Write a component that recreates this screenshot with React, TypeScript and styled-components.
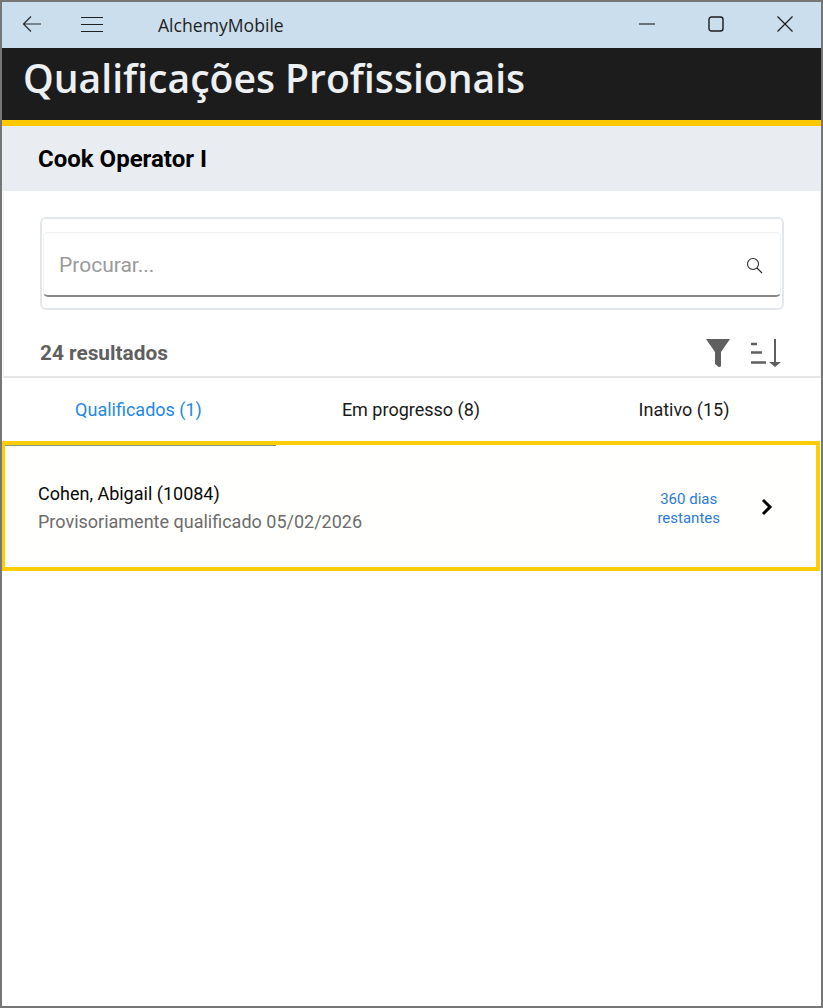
import React from "react";
import styled, { createGlobalStyle } from "styled-components";

const GlobalStyle = createGlobalStyle`
  html, body {
    margin: 0;
    padding: 0;
    background: #ffffff;
  }
`;

const Window = styled.div`
  box-sizing: border-box;
  width: 823px;
  height: 1008px;
  border: 2px solid #767676;
  display: flex;
  flex-direction: column;
  background: #ffffff;
  overflow: hidden;
`;

const TitleBar = styled.div`
  height: 46px;
  flex: none;
  background: #cbdeed;
  display: flex;
  align-items: center;
  padding-right: 2px;
`;

const BarButton = styled.button<{ $width: number }>`
  box-sizing: border-box;
  width: ${(p) => p.$width}px;
  height: 46px;
  flex: none;
  border: 0;
  padding: 0 0 2px 0;
  background: transparent;
  display: flex;
  align-items: center;
  justify-content: center;
`;

const AppName = styled.div`
  margin-left: 36px;
  font-family: "Open Sans", "Noto Sans", sans-serif;
  font-size: 17.6px;
  color: #1f1f1f;
  flex: 1;
`;

const PageHeader = styled.header`
  box-sizing: border-box;
  height: 78px;
  flex: none;
  background: #1c1c1c;
  border-bottom: 6px solid #ffc800;
  padding-left: 21px;
  display: flex;
  align-items: flex-start;
`;

const PageTitle = styled.h1`
  margin: 0;
  font-family: "Open Sans", "Noto Sans", sans-serif;
  font-size: 39.1px;
  line-height: 60px;
  font-weight: 600;
  color: #edf0f3;
`;

const SubHeader = styled.div`
  box-sizing: border-box;
  height: 65px;
  flex: none;
  background: #e9edf1;
  padding-left: 36px;
  display: flex;
  align-items: center;
  font-family: Roboto, sans-serif;
  font-size: 24px;
  font-weight: 700;
  color: #000000;
`;

const SearchPanel = styled.section`
  box-sizing: border-box;
  height: 187px;
  flex: none;
  margin-left: 1px;
  padding: 26px 36px 0 36px;
  border-bottom: 2px solid #e6e6e6;
  border-right: 1px solid #f0f0f0;
  border-left: 1px solid #f4f4f4;
  display: flex;
  flex-direction: column;
`;

const SearchFrame = styled.div`
  box-sizing: border-box;
  height: 93px;
  flex: none;
  border: 2px solid #e2e7ec;
  border-radius: 6px;
  padding: 13px 1px 0 1px;
`;

const SearchField = styled.div`
  box-sizing: border-box;
  height: 65px;
  border: 1px solid #eef0f2;
  border-bottom: 2px solid #868686;
  border-radius: 5px;
  padding: 2px 17px 0 15px;
  display: flex;
  align-items: center;
  justify-content: space-between;
  font-family: Roboto, sans-serif;
  font-size: 21px;
  color: #9a9a9a;
`;

const ResultsRow = styled.div`
  flex: 1;
  display: flex;
  align-items: center;
  justify-content: space-between;
  padding-top: 19px;
`;

const ResultsCount = styled.div`
  font-family: Roboto, sans-serif;
  font-size: 20.8px;
  font-weight: 700;
  color: #5f5f5f;
`;

const ResultsTools = styled.div`
  display: flex;
  align-items: center;
  gap: 21px;
  padding-right: 3px;
`;

const Tabs = styled.nav`
  height: 63px;
  flex: none;
  display: grid;
  grid-template-columns: 273px 272px 1fr;
  align-items: center;
  padding-bottom: 1px;
  box-sizing: border-box;
`;

const Tab = styled.div<{ $active?: boolean }>`
  text-align: center;
  font-family: Roboto, sans-serif;
  font-size: 18px;
  color: ${(p) => (p.$active ? "#1f88e5" : "#1a1a1a")};
`;

const Card = styled.article`
  position: relative;
  box-sizing: border-box;
  height: 130px;
  flex: none;
  margin-right: 1px;
  margin-left: -1px;
  border: 4px solid #ffcd05;
  background: #fffffd;
  padding-left: 33px;
  padding-right: 43px;
  display: flex;
  align-items: center;
  justify-content: space-between;
`;

const TabIndicator = styled.div`
  position: absolute;
  left: 0;
  top: 0;
  width: 271px;
  height: 1px;
  background: #7f9a78;
`;

const PersonInfo = styled.div`
  display: flex;
  flex-direction: column;
  gap: 6px;
  font-family: Roboto, sans-serif;
  padding-top: 3px;
`;

const PersonName = styled.div`
  font-size: 18px;
  line-height: 22px;
  color: #0a0a0a;
`;

const PersonStatus = styled.div`
  font-size: 18px;
  line-height: 22px;
  color: #6c6c6c;
`;

const CardAside = styled.div`
  display: flex;
  align-items: center;
  gap: 41px;
  padding-top: 2px;
`;

const DaysLeft = styled.div`
  text-align: center;
  font-family: Roboto, sans-serif;
  font-size: 15px;
  line-height: 19px;
  color: #2a7bd6;
  padding-top: 3px;
`;

const App = () => (
  <Window>
    <GlobalStyle />
    <TitleBar>
      <BarButton $width={60}>
        <svg width="20" height="18" viewBox="0 0 20 18" fill="none" stroke="#2b2b2b" strokeWidth="1.2">
          <path d="M19 9H1.500M9 1.500 1.500 9 9 16.500" />
        </svg>
      </BarButton>
      <BarButton $width={60}>
        <svg width="24" height="17" viewBox="0 0 24 17" fill="none" stroke="#1f1f1f" strokeWidth="1">
          <path d="M1 1.500h22M1 8.500h22M1 15.500h22" />
        </svg>
      </BarButton>
      <AppName>AlchemyMobile</AppName>
      <BarButton $width={69}>
        <svg width="16" height="2" viewBox="0 0 16 2" fill="none" stroke="#2b2b2b" strokeWidth="1.2">
          <path d="M0 1h16" />
        </svg>
      </BarButton>
      <BarButton $width={69}>
        <svg width="16" height="16" viewBox="0 0 16 16" fill="none" stroke="#1c1c1c" strokeWidth="1.4">
          <rect x="1" y="1" width="14" height="14" rx="2.500" />
        </svg>
      </BarButton>
      <BarButton $width={69}>
        <svg width="16" height="16" viewBox="0 0 16 16" fill="none" stroke="#1c1c1c" strokeWidth="1.2">
          <path d="M.5.5l15 15M15.500.5l-15 15" />
        </svg>
      </BarButton>
    </TitleBar>

    <PageHeader>
      <PageTitle>Qualificações Profissionais</PageTitle>
    </PageHeader>

    <SubHeader>Cook Operator I</SubHeader>

    <SearchPanel>
      <SearchFrame>
        <SearchField>
          Procurar...
          <svg width="17" height="17" viewBox="0 0 17 17" fill="none" stroke="#2a2a2a" strokeWidth="1.1">
            <circle cx="7" cy="7" r="5.500" />
            <path d="M11 11l5 5" />
          </svg>
        </SearchField>
      </SearchFrame>
      <ResultsRow>
        <ResultsCount>24 resultados</ResultsCount>
        <ResultsTools>
          <svg width="24" height="28" viewBox="0 0 24 28" fill="#5f5f5f">
            <path d="M0 0h24L15 13v13.500c0 1-1 1.500-1.800 1.500-.8 0-1.400-.4-2-1.200L9 25V13z" />
          </svg>
          <svg width="30" height="28" viewBox="0 0 30 28" fill="none" stroke="#5f5f5f" strokeWidth="2.500">
            <path d="M0 5h6M0 13.500h11M0 23.500h15" />
            <path d="M24 0v24" strokeWidth="2" />
            <path d="M18 23h12l-6 5z" fill="#5f5f5f" stroke="none" />
          </svg>
        </ResultsTools>
      </ResultsRow>
    </SearchPanel>

    <Tabs>
      <Tab $active>Qualificados (1)</Tab>
      <Tab>Em progresso (8)</Tab>
      <Tab>Inativo (15)</Tab>
    </Tabs>

    <Card>
      <TabIndicator />
      <PersonInfo>
        <PersonName>Cohen, Abigail (10084)</PersonName>
        <PersonStatus>Provisoriamente qualificado 05/02/2026</PersonStatus>
      </PersonInfo>
      <CardAside>
        <DaysLeft>
          360 dias
          <br />
          restantes
        </DaysLeft>
        <svg width="12" height="18" viewBox="0 0 12 18" fill="none" stroke="#000000" strokeWidth="3">
          <path d="M2 2l7 7-7 7" />
        </svg>
      </CardAside>
    </Card>
  </Window>
);

export default App;
